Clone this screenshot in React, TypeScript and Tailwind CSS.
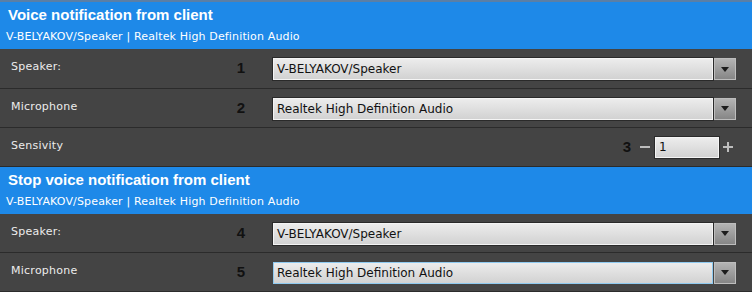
const labelFont = "font-['DejaVu_Sans',Verdana,sans-serif]";

function Header({ title }: { title: string }) {
  return (
    <div className="h-[47px] bg-[#1e89e8] pl-[8px] text-white">
      <div className="pt-[3px] text-[15px] leading-[20px] font-bold font-['Liberation_Sans',Arial,sans-serif]">
        {title}
      </div>
      <div className={`mt-[5px] text-[11px] leading-[13px] tracking-[0.15px] ${labelFont} -ml-[2px]`}>
        V-BELYAKOV/Speaker | Realtek High Definition Audio
      </div>
    </div>
  );
}

function Num({ n }: { n: string }) {
  return (
    <span className="w-[18px] text-center text-[15px] font-bold text-[#111] font-['Liberation_Sans',Arial,sans-serif]">
      {n}
    </span>
  );
}

function Select({ value, focused }: { value: string; focused?: boolean }) {
  return (
    <div className="flex h-[22px] w-[463px] gap-px">
      <div
        className={`flex flex-1 items-center border px-[3px] text-[12px] text-[#111] bg-gradient-to-b from-[#ececec] to-[#d2d2d2] ${labelFont} ${
          focused ? "border-[#8fcaf0]" : "border-[#f4f4f4] outline outline-1 outline-[#2a2a2a]"
        }`}
      >
        {value}
      </div>
      <div className="flex w-[22px] items-center justify-center border border-[#bdbdbd] bg-gradient-to-b from-[#b4b4b4] to-[#868686]">
        <svg width="8" height="5" viewBox="0 0 8 5">
          <path d="M0 0h8L4 5z" fill="#1c1c1c" />
        </svg>
      </div>
    </div>
  );
}

function Row({
  label,
  num,
  value,
  focused,
  tall,
}: {
  label: string;
  num: string;
  value: string;
  focused?: boolean;
  tall?: boolean;
}) {
  return (
    <div
      className={`flex items-center border-b border-[#2b2b2b] ${tall ? "h-[40px]" : "h-[39px]"}`}
    >
      <span
        className={`w-[232px] pl-[11px] text-[11px] tracking-[0.25px] text-[#ececec] ${labelFont} -mt-[2px]`}
      >
        {label}
      </span>
      <Num n={num} />
      <div className="ml-[23px] mt-px">
        <Select value={value} focused={focused} />
      </div>
    </div>
  );
}

export default function App() {
  return (
    <div className="h-[292px] w-[752px] overflow-hidden bg-[#444444] border-t-2 border-[#5b7fa6]">
      <Header title="Voice notification from client" />
      <Row label="Speaker:" num="1" value="V-BELYAKOV/Speaker" tall />
      <Row label="Microphone" num="2" value="Realtek High Definition Audio" />
      <div className="flex h-[39px] items-center border-b border-[#2b2b2b]">
        <span
          className={`flex-1 pl-[11px] text-[11px] tracking-[0.25px] text-[#ececec] ${labelFont} -mt-[2px]`}
        >
          Sensivity
        </span>
        <Num n="3" />
        <span className="ml-[4px] h-[2px] w-[10px] bg-[#bdbdbd]" />
        <div
          className={`ml-[5px] flex h-[21px] w-[64px] items-center border border-[#f4f4f4] outline outline-1 outline-[#2a2a2a] bg-gradient-to-b from-[#ececec] to-[#d2d2d2] px-[3px] text-[12px] text-[#111] ${labelFont}`}
        >
          1
        </div>
        <span className="relative ml-[4px] mr-[19px] h-[10px] w-[10px]">
          <span className="absolute left-0 top-[4px] h-[2px] w-[10px] bg-[#bdbdbd]" />
          <span className="absolute left-[4px] top-0 h-[10px] w-[2px] bg-[#bdbdbd]" />
        </span>
      </div>
      <Header title="Stop voice notification from client" />
      <Row label="Speaker:" num="4" value="V-BELYAKOV/Speaker" />
      <Row label="Microphone" num="5" value="Realtek High Definition Audio" focused />
    </div>
  );
}
